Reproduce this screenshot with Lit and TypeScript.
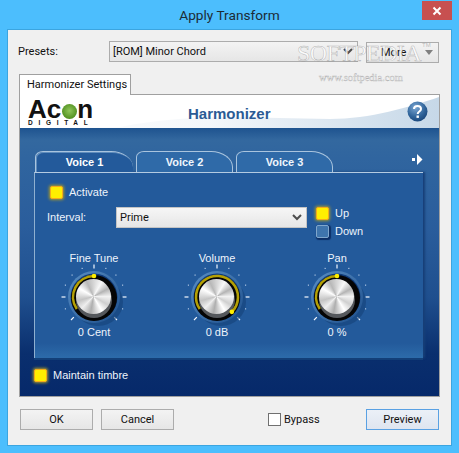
import { LitElement, html, css, svg } from "lit";
import { customElement } from "lit/decorators.js";

const pt = (r: number, deg: number) => {
  const a = (deg - 90) * Math.PI / 180;
  return [45 + r * Math.cos(a), 36 + r * Math.sin(a)];
};

function arc(r: number, from: number, to: number) {
  const [x1, y1] = pt(r, from);
  const [x2, y2] = pt(r, to);
  const large = to - from > 180 ? 1 : 0;
  return `M${x1} ${y1}A${r} ${r} 0 ${large} 1 ${x2} ${y2}`;
}

function knobSvg(end: number) {
  const ticks = [];
  for (let i = -6; i <= 6; i++) {
    const deg = i * 22.5;
    if (Math.abs(i) === 0 || Math.abs(i) === 4 || Math.abs(i) === 6) {
      const [x1, y1] = pt(28.5, deg);
      const [x2, y2] = pt(32.5, deg);
      ticks.push(svg`<line x1=${x1} y1=${y1} x2=${x2} y2=${y2} stroke="#f4f8ff" stroke-width="1.2"/>`);
    } else {
      const [x, y] = pt(31, deg);
      ticks.push(svg`<rect x=${x - 0.5} y=${y - 0.5} width="1" height="1" fill="#e8f0ff"/>`);
    }
  }
  const [dx, dy] = pt(21, end);
  return html`<svg class="knob-svg" width="90" height="72" viewBox="0 0 90 72">
    <defs>
      <linearGradient id="halo" x1="0" y1="0" x2="1" y2="1">
        <stop offset="0" stop-color="#5a8fc4"/>
        <stop offset="1" stop-color="#1d4f8c"/>
      </linearGradient>
    </defs>
    ${ticks}
    <ellipse cx="49" cy="41" rx="25" ry="24" fill="#143f75" opacity=".55"/>
    <circle cx="45" cy="36" r="26" fill="url(#halo)"/>
    <circle cx="45" cy="36" r="23.5" fill="#0f3a78"/>
    <circle cx="45" cy="37" r="23" fill="#050505"/>
    <circle cx="45" cy="39" r="18" fill="#55585c"/>
    <path d=${arc(21, -125, end)} fill="none" stroke="#b4a005" stroke-width="2.6"/>
    <circle cx=${dx} cy=${dy} r="2.300" fill="#ffee00"/>
  </svg>`;
}

@customElement("app-root")
export class AppRoot extends LitElement {
  static styles = css`
    :host {
      display: flex;
      flex-direction: column;
      width: 459px;
      height: 453px;
      overflow: hidden;
      background: #4cbefd;
      font-family: Roboto, "Noto Sans", sans-serif;
      font-size: 11px;
      color: #111;
    }
    .title {
      height: 29px;
      flex: none;
      display: grid;
      grid-template-columns: 1fr auto 1fr;
      font-size: 13.7px;
      color: #1c2b35;
      line-height: 31px;
    }
    .close {
      grid-column: 3;
      justify-self: end;
      width: 30px;
      height: 19px;
      margin: 1px 7px 0 0;
      background: #c75050;
      display: flex;
      align-items: center;
      justify-content: center;
    }
    .title span { grid-column: 2; }
    .client {
      position: relative;
      flex: none;
      width: 445px;
      height: 417px;
      margin-left: 7px;
      box-sizing: border-box;
      border: 1px solid #3ba5e0;
      background: #f0f0f0;
      padding: 11px 11px 0;
    }
    .presets { display: flex; align-items: flex-start; height: 22px; margin-bottom: 11px; }
    .presets-label { width: 91px; margin-left: -1px; line-height: 22px; }
    .combo {
      width: 249px;
      height: 21px;
      box-sizing: border-box;
      border: 1px solid #acacac;
      background: linear-gradient(#f3f3f3, #e6e6e6);
      display: flex;
      align-items: center;
      justify-content: space-between;
      padding: 0 3px 0 3px;
    }
    .more {
      margin: 1px 0 0 8px;
      width: 73px;
      height: 21px;
      box-sizing: border-box;
      border: 1px solid #acacac;
      background: linear-gradient(#f3f3f3, #e6e6e6);
      display: flex;
      align-items: center;
      justify-content: space-between;
      padding: 0 5px 0 14px;
    }
    .caret { width: 0; height: 0; border: 4.5px solid transparent; border-top: 5px solid #808080; border-bottom: 0; }
    .page-tab {
      width: 112px;
      height: 21px;
      box-sizing: border-box;
      border: 1px solid #a0a0a0;
      border-bottom: 0;
      background: #fff;
      padding-left: 7px;
      line-height: 19px;
      position: relative;
      z-index: 1;
      white-space: nowrap;
    }
    .panel {
      width: 421px;
      height: 303px;
      margin-top: -1px;
      box-sizing: border-box;
      border: 1px solid #a0a0a0;
      display: flex;
      flex-direction: column;
    }
    .head {
      height: 33px;
      flex: none;
      position: relative;
      background: #fff;
      display: flex;
      align-items: center;
      padding-left: 8px;
    }
    .wave { position: absolute; inset: 0; }
    .logo { position: relative; width: 160px; font-family: "Liberation Sans", sans-serif; font-weight: bold; color: #111; margin-top: 1px; }
    .logo-top { font-size: 26px; line-height: 22px; height: 22px; }
    .o {
      display: inline-block;
      width: 15px;
      height: 15px;
      line-height: 15px;
      margin: 0 0.5px;
      border-radius: 50%;
      background: radial-gradient(circle at 50% 45%, #8fc65a, #4f8f1e 75%);
      color: transparent;
      font-size: 10px;
      text-align: center;
      vertical-align: -1px;
      overflow: hidden;
    }
    .logo-bottom { font-size: 6.5px; line-height: 6px; letter-spacing: 5.7px; white-space: nowrap; }
    .head-title {
      position: relative;
      font-family: "Liberation Sans", sans-serif;
      font-weight: bold;
      font-size: 15px;
      color: #2b5b95;
      margin-top: 3px;
    }
    .help { position: absolute; right: 11px; top: 6px; }
    .plugin {
      flex: 1;
      padding: 23px 15px 0 14px;
      background: linear-gradient(#1e538f 0, #33689f 12px, #30659f 30px, #2a5d9c 100px, #1f4f8e 170px, #0a2f6e 225px, #06296a 268px);
      font-family: "Liberation Sans", sans-serif;
      font-size: 11px;
      color: #eef4fb;
      display: flex;
      flex-direction: column;
    }
    .tabs { display: flex; height: 21px; padding-left: 1px; position: relative; z-index: 1; }
    .vt {
      width: 97px;
      height: 21px;
      box-sizing: border-box;
      margin-right: 3px;
      border: 1px solid #a9c4de;
      border-bottom: 0;
      border-radius: 8px 22px 0 0 / 6px 16px 0 0;
      background: #2f6aa8;
      text-align: center;
      font-weight: bold;
      line-height: 21px;
      color: #f0f6fc;
    }
    .vt.on { width: 98px; background: #235a9b; color: #fff; border-width: 1px 0 0 1px; box-shadow: inset 1px 1px 0 #5f8dbd; }
    .arrow { margin: 3px 0 0 auto; }
    .inner {
      height: 186px;
      box-sizing: border-box;
      flex: none;
      margin-right: 1px;
      border-top: 1px solid #b4cbe2;
      border-left: 1px solid #8fb0d0;
      background: linear-gradient(#235a9b 0, #235a9b 170px, #2c6aa9 184px);
      box-shadow: 2px 0 2px #173f77, 0 2px 0 #13407a;
      padding: 13px 0 0 15px;
    }
    .row { display: flex; align-items: center; }
    .led {
      width: 13px;
      height: 13px;
      flex: none;
      box-sizing: border-box;
      background: #ffee00;
      border: 1px solid #f2a91d;
      border-radius: 2px;
      box-shadow: 0 0 3px 1px #a89a2c;
    }
    .led.off {
      background: #3f75ad;
      border: 1px solid #7fa6cc;
      box-shadow: 1px 1px 1px 1px #0d2f66;
    }
    .led-text { margin: 0 0 1px 6px; line-height: 12px; }
    .interval { display: flex; margin: 8px 0 0 -3px; height: 30px; }
    .interval-label { width: 69px; line-height: 21px; }
    .select {
      width: 191px;
      height: 21px;
      box-sizing: border-box;
      border: 1px solid #c4c4c4;
      background: linear-gradient(#f6f6f6, #e6e6e6);
      color: #111;
      font-family: Roboto, sans-serif;
      font-size: 11px;
      display: flex;
      align-items: center;
      justify-content: space-between;
      padding: 0 3px 0 3px;
    }
    .updown { margin-left: 9px; display: flex; flex-direction: column; gap: 5px; }
    .knobs { display: flex; margin-top: 15px; margin-left: -1px; }
    .knob { width: 90px; display: flex; flex-direction: column; align-items: center; }
    .knob:nth-child(2) { margin-left: 33px; }
    .knob:nth-child(3) { margin-left: 30px; }
    .knob-label { line-height: 13px; height: 13px; }
    .dial { position: relative; width: 90px; height: 72px; margin-top: -4px; }
    .knob-svg { display: block; }
    .cap {
      position: absolute;
      left: 27px;
      top: 18px;
      width: 35px;
      height: 35px;
      border-radius: 50%;
      background: conic-gradient(#d5d5d5, #f8f8f8 30deg, #b4b4b4 62deg, #f2f2f2 90deg, #cfcfcf 120deg, #ffffff 150deg, #aeaeae 190deg, #eeeeee 225deg, #c4c4c4 255deg, #ffffff 300deg, #b8b8b8 335deg, #d5d5d5);
    }
    .knob-value { line-height: 13px; margin-top: -7px; }
    .timbre { margin: 11px 0 0 0; }
    .foot { display: flex; align-items: center; margin: 12px 0 0 1px; }
    .btn {
      width: 73px;
      height: 21px;
      box-sizing: border-box;
      border: 1px solid #acacac;
      background: linear-gradient(#f3f3f3, #e6e6e6);
      text-align: center;
      line-height: 19px;
    }
    .btn + .btn { margin-left: 8px; }
    .bypass { display: flex; align-items: center; margin-left: 94px; width: 98px; }
    .check { width: 13px; height: 13px; box-sizing: border-box; border: 1px solid #707070; background: #fff; margin-right: 3px; }
    .preview { border-color: #5aa1e3; background: linear-gradient(#ebf0f7, #dfe5f0); }
    .mark {
      position: absolute;
      left: 289px;
      top: 10px;
      font-family: "Liberation Serif", serif;
      font-size: 24px;
      line-height: 26px;
      letter-spacing: -0.6px;
      color: rgba(255, 255, 255, .8);
      -webkit-text-stroke: .5px rgba(120, 120, 120, .55);
      white-space: nowrap;
    }
    .mark-url {
      position: absolute;
      left: 311px;
      top: 41px;
      font-family: "Liberation Serif", serif;
      font-size: 10.5px;
      line-height: 14px;
      color: rgba(255, 255, 255, .85);
      -webkit-text-stroke: .4px rgba(120, 120, 120, .55);
      white-space: nowrap;
    }
    .tm {
      position: absolute;
      left: 414px;
      top: 11px;
      font-size: 6px;
      line-height: 8px;
      color: #bdbdbd;
      font-family: "Liberation Sans", sans-serif;
    }
  `;

  private chevron() {
    return html`<svg width="12" height="9" viewBox="0 0 12 9"><path d="M2 2l4 4 4-4" fill="none" stroke="#4d4d4d" stroke-width="2"/></svg>`;
  }

  private knob(label: string, value: string, end: number) {
    return html`<div class="knob">
      <div class="knob-label">${label}</div>
      <div class="dial">${knobSvg(end)}<div class="cap"></div></div>
      <div class="knob-value">${value}</div>
    </div>`;
  }

  render() {
    return html`
      <div class="title">
        <span>Apply Transform</span>
        <div class="close">
          <svg width="10" height="10" viewBox="0 0 10 10"><path d="M1.5 1.5l7 7M8.5 1.5l-7 7" stroke="#fff" stroke-width="2"/></svg>
        </div>
      </div>
      <div class="client">
        <div class="presets">
          <div class="presets-label">Presets:</div>
          <div class="combo"><span>[ROM] Minor Chord</span>${this.chevron()}</div>
          <div class="more"><span>More</span><div class="caret"></div></div>
        </div>
        <div class="page-tab">Harmonizer Settings</div>
        <div class="panel">
          <div class="head">
            <svg class="wave" width="419" height="33" viewBox="0 0 419 33">
              <defs>
                <linearGradient id="w" x1="0" y1="0" x2="1" y2="0">
                  <stop offset="0" stop-color="#fff"/>
                  <stop offset=".45" stop-color="#f4f7fa"/>
                  <stop offset="1" stop-color="#c6d8e8"/>
                </linearGradient>
              </defs>
              <path d="M100 32C170 18 230 23 310 24 350 24 390 12 419 2V33H0Z" fill="url(#w)"/>
            </svg>
            <div class="logo">
              <div class="logo-top">Ac<span class="o">o</span>n</div>
              <div class="logo-bottom">DIGITAL</div>
            </div>
            <div class="head-title">Harmonizer</div>
            <svg class="help" width="21" height="21" viewBox="0 0 21 21">
              <defs>
                <radialGradient id="h" cx=".4" cy=".3" r=".8">
                  <stop offset="0" stop-color="#7ba7d3"/>
                  <stop offset=".6" stop-color="#2f6399"/>
                  <stop offset="1" stop-color="#143f73"/>
                </radialGradient>
              </defs>
              <circle cx="10.5" cy="10.5" r="10" fill="url(#h)"/>
              <path d="M7 8c0-2 1.600-3 3.500-3S14 6 14 8c0 2.600-3.300 2.400-3.300 5" fill="none" stroke="#fff" stroke-width="2"/>
              <rect x="9.500" y="14.500" width="2.400" height="2.400" fill="#fff"/>
            </svg>
          </div>
          <div class="plugin">
            <div class="tabs">
              <div class="vt on">Voice 1</div>
              <div class="vt">Voice 2</div>
              <div class="vt">Voice 3</div>
              <svg class="arrow" width="13" height="11" viewBox="0 0 13 11">
                <rect x="1" y="4" width="3" height="3" fill="#fff"/>
                <path d="M6 0l5.500 5.500L6 11Z" fill="#fff"/>
              </svg>
            </div>
            <div class="inner">
              <div class="row"><div class="led"></div><div class="led-text">Activate</div></div>
              <div class="interval">
                <div class="interval-label">Interval:</div>
                <div class="select"><span>Prime</span>${this.chevron()}</div>
                <div class="updown">
                  <div class="row"><div class="led"></div><div class="led-text">Up</div></div>
                  <div class="row"><div class="led off"></div><div class="led-text">Down</div></div>
                </div>
              </div>
              <div class="knobs">
                ${this.knob("Fine Tune", "0 Cent", 0)}
                ${this.knob("Volume", "0 dB", 135)}
                ${this.knob("Pan", "0 %", 0)}
              </div>
            </div>
            <div class="row timbre"><div class="led"></div><div class="led-text">Maintain timbre</div></div>
          </div>
        </div>
        <div class="foot">
          <div class="btn">OK</div>
          <div class="btn">Cancel</div>
          <div class="bypass"><div class="check"></div><span>Bypass</span></div>
          <div class="btn preview">Preview</div>
        </div>
        <div class="mark">SOFTPEDIA</div>
        <div class="tm">TM</div>
        <div class="mark-url">www.softpedia.com</div>
      </div>
    `;
  }
}
